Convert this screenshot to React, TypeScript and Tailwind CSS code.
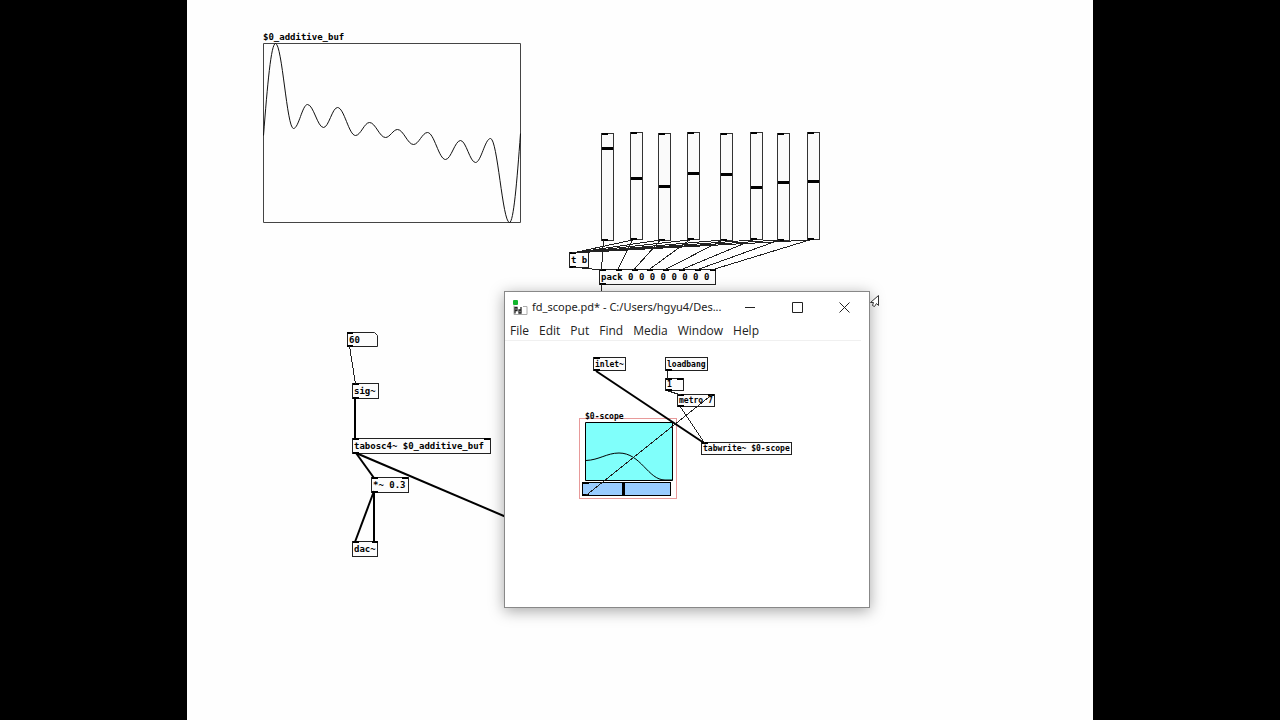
type Wire = { from: [number, number]; to: [number, number]; signal?: boolean };

type BoxProps = {
  x: number;
  y: number;
  w: number;
  h: number;
  text: string;
  inlets?: number[];
  outlets?: number[];
  small?: boolean;
};

const sliders = [
  { x: 414, y: 133, value: 90 },
  { x: 443, y: 132, value: 59 },
  { x: 471, y: 133, value: 52 },
  { x: 500, y: 132, value: 64 },
  { x: 533, y: 133, value: 64 },
  { x: 563, y: 132, value: 50 },
  { x: 590, y: 133, value: 56 },
  { x: 620, y: 132, value: 56 },
];

const packInlets = [0, 16, 32, 47, 63, 79, 95, 110];

const mainWires: Wire[] = [
  ...sliders.map((s, i): Wire => ({ from: [s.x + 2, 240], to: [414 + packInlets[i], 270] })),
  ...sliders.slice(1).map((s): Wire => ({ from: [s.x + 2, 240], to: [385, 253] })),
  { from: [385, 267], to: [414, 270] },
  { from: [414, 284], to: [414, 300] },
  { from: [162, 346], to: [168, 384] },
  { from: [168, 398], to: [168, 439], signal: true },
  { from: [169, 453], to: [187, 478], signal: true },
  { from: [169, 453], to: [324, 519], signal: true },
  { from: [187, 491], to: [168, 542], signal: true },
  { from: [187, 491], to: [187, 542], signal: true },
];

const scopeWires: Wire[] = [
  { from: [91, 30], to: [199, 102], signal: true },
  { from: [162, 30], to: [162, 38] },
  { from: [163, 50], to: [175, 54] },
  { from: [175, 66], to: [199, 102] },
  { from: [81, 154], to: [206, 54] },
];

// turning points of the stored wave, first and last are the array ends
const wave: [number, number][] = [
  [0, 92], [12, 0], [30, 85], [44, 61], [60, 84], [74, 64], [92, 92], [106, 79], [122, 94],
  [134, 86], [150, 101], [164, 89], [182, 116], [197, 97], [212, 119], [227, 95], [246, 179], [257, 90],
];

function wavePath(points: [number, number][]) {
  const last = points.length - 1;
  let d = `M${points[0][0]} ${points[0][1]}`;
  for (let i = 1; i <= last; i++) {
    const [x0, y0] = points[i - 1];
    const [x1, y1] = points[i];
    const dx = x1 - x0;
    const dy = y1 - y0;
    const c0 = i === 1 ? [x0 + dx * 0.33, y0 + dy * 0.55] : [x0 + dx * 0.37, y0];
    const c1 = i === last ? [x1 - dx * 0.33, y1 - dy * 0.55] : [x1 - dx * 0.37, y1];
    d += ` C${c0[0]} ${c0[1]} ${c1[0]} ${c1[1]} ${x1} ${y1}`;
  }
  return d;
}

function Wires({ wires }: { wires: Wire[] }) {
  return (
    <svg className="pointer-events-none absolute inset-0 h-full w-full" aria-hidden="true">
      {wires.map((w, i) => {
        const shift = w.signal ? 0 : 0.5;
        return (
          <line
            key={i}
            x1={w.from[0] + shift}
            y1={w.from[1]}
            x2={w.to[0] + shift}
            y2={w.to[1]}
            stroke={w.signal ? '#000' : '#222'}
            strokeWidth={w.signal ? 2 : 1}
            shapeRendering={w.signal ? 'auto' : 'crispEdges'}
          />
        );
      })}
    </svg>
  );
}

function Ports({ inlets = [0], outlets = [0] }: { inlets?: number[]; outlets?: number[] }) {
  return (
    <>
      {inlets.map((p) => (
        <span key={`i${p}`} className="absolute -top-px h-[2px] w-[6px] bg-black" style={{ left: p }} />
      ))}
      {outlets.map((p) => (
        <span key={`o${p}`} className="absolute -bottom-px h-[2px] w-[6px] bg-black" style={{ left: p }} />
      ))}
    </>
  );
}

function ObjectBox({ x, y, w, h, text, inlets, outlets, small }: BoxProps) {
  return (
    <div
      className={`absolute flex items-center whitespace-pre border border-[#222] bg-[#fcfcfc] pl-px font-bold leading-none ${
        small ? 'pt-px text-[8px]' : 'text-[9px]'
      }`}
      style={{ left: x, top: y, width: w, height: h }}
    >
      <Ports inlets={inlets} outlets={outlets} />
      {text}
    </div>
  );
}

function VSlider({ x, y, value, label }: { x: number; y: number; value: number; label: string }) {
  return (
    <div className="absolute h-[108px] w-[13px] border border-[#333] bg-[#fafafa]" style={{ left: x, top: y }}>
      <input
        type="range"
        min={0}
        max={103}
        defaultValue={value}
        aria-label={label}
        className="m-0 block h-full w-full appearance-none bg-transparent [direction:rtl] [writing-mode:vertical-lr] [&::-webkit-slider-thumb]:h-[3px] [&::-webkit-slider-thumb]:w-[11px] [&::-webkit-slider-thumb]:appearance-none [&::-webkit-slider-thumb]:bg-black"
      />
      <Ports />
    </div>
  );
}

function PdIcon() {
  return (
    <svg width="15" height="15" viewBox="0 0 15 15" aria-hidden="true">
      <path d="M1 5.500v9h13v-8H10" fill="#fff" stroke="#aaa" />
      <rect x="0" y="0" width="5" height="5" rx="1" fill="#12b52c" />
      <path d="M2 13.500V7.500h2v3H2M8 7v6H6v-3h2" fill="none" stroke="#222" strokeWidth="1.3" />
    </svg>
  );
}

// graph-on-parent area: array view on top, interval slider under it
function ScopeGraph() {
  return (
    <div className="absolute left-[74px] top-[77px] flex h-[81px] w-[98px] flex-col border border-[#e89a9a] pl-[2px]">
      <div className="-mt-[7px] pl-[3px] text-[8px] font-bold leading-[10px]">$0-scope</div>
      <svg className="ml-[3px] shrink-0" width="88" height="59" fill="#80fffb" stroke="#000">
        <path d="M.5.5h87v58H.5z" />
        <path d="M1 38.500C14 38 22 31 34 31C56 31 63 58 80 58H87" fill="none" />
      </svg>
      <div className="relative mt-px h-[14px] w-[89px] border border-black bg-[#99ccff]">
        <input
          type="range"
          min={0}
          max={84}
          defaultValue={39}
          aria-label="Scope interval"
          className="m-0 block h-full w-full appearance-none bg-transparent [&::-webkit-slider-thumb]:h-[12px] [&::-webkit-slider-thumb]:w-[3px] [&::-webkit-slider-thumb]:appearance-none [&::-webkit-slider-thumb]:bg-black"
        />
        <Ports />
      </div>
    </div>
  );
}

function ScopeWindow() {
  return (
    <section
      aria-label="fd_scope.pd"
      className="absolute left-[317px] top-[291px] flex h-[317px] w-[366px] flex-col border border-[#888] bg-white font-['Open_Sans','Noto_Sans',sans-serif] text-[12px] text-[#222] shadow-[0_3px_14px_rgba(0,0,0,0.35)]"
    >
      <header className="flex h-[30px] items-center pl-2 pr-px">
        <PdIcon />
        <h1 className="ml-1 min-w-0 flex-1 whitespace-nowrap font-['Noto_Sans','Open_Sans',sans-serif] text-[11px]">
          fd_scope.pd* - C:/Users/hgyu4/Des...
        </h1>
        <button type="button" aria-label="Minimize" className="flex h-full w-[47px] shrink-0 items-center justify-center">
          <svg width="11" height="11" stroke="#222"><path d="M0 5.5h10" /></svg>
        </button>
        <button type="button" aria-label="Maximize" className="flex h-full w-[47px] shrink-0 items-center justify-center">
          <svg width="11" height="11" fill="none" stroke="#222"><path d="M.5.5h10v10H.5z" /></svg>
        </button>
        <button type="button" aria-label="Close" className="flex h-full w-[47px] shrink-0 items-center justify-center">
          <svg width="11" height="11" stroke="#222"><path d="M.5.5l10 10M10.500.5l-10 10" /></svg>
        </button>
      </header>
      <nav className="mr-2 flex h-[19px] items-center gap-[10px] border-b border-[#f0f0f0] pl-[5px]">
        {['File', 'Edit', 'Put', 'Find', 'Media', 'Window', 'Help'].map((item) => (
          <button key={item} type="button">{item}</button>
        ))}
      </nav>
      <div className="relative flex-1 overflow-hidden font-['DejaVu_Sans_Mono',monospace] text-black">
        <ObjectBox small x={88} y={16} w={33} h={14} text="inlet~" />
        <ObjectBox small x={160} y={16} w={43} h={14} text="loadbang" inlets={[]} />
        <button
          type="button"
          className="absolute left-[160px] top-[37px] flex h-[13px] w-[19px] items-center border border-[#222] bg-[#fcfcfc] pl-px text-[8px] font-bold leading-none"
        >
          <Ports inlets={[0, 11]} />
          1
        </button>
        <ObjectBox small x={172} y={53} w={38} h={13} text="metro 7" inlets={[0, 30]} />
        <ObjectBox small x={196} y={101} w={91} h={13} text="tabwrite~ $0-scope" outlets={[]} />
        <ScopeGraph />
        <Wires wires={scopeWires} />
      </div>
    </section>
  );
}

export default function App() {
  return (
    <div className="grid min-h-screen grid-cols-[187fr_906fr_187fr] bg-black">
      <main className="relative col-start-2 overflow-hidden bg-[#fefefe] font-['DejaVu_Sans_Mono',monospace] text-black">
        <figure className="absolute left-[76px] top-[31px] flex flex-col">
          <figcaption className="h-3 text-[9px] font-bold leading-3">$0_additive_buf</figcaption>
          <svg width="258" height="180" fill="none" stroke="#111">
            <path d="M.5.5h257v179H.5z" stroke="#444" />
            <path d={wavePath(wave)} transform="translate(.5 .5)" />
          </svg>
        </figure>

        {sliders.map((s, i) => (
          <VSlider key={s.x} x={s.x} y={s.y} value={s.value} label={`Partial ${i + 1}`} />
        ))}
        <ObjectBox x={382} y={252} w={20} h={16} text="t b" />
        <ObjectBox x={412} y={269} w={117} h={16} text="pack 0 0 0 0 0 0 0 0" inlets={packInlets} />

        <div className="absolute left-[160px] top-[332px] h-[15px] w-[31px]">
          <svg className="absolute inset-0" width="31" height="15" fill="#fcfcfc" stroke="#222">
            <path d="M.5.5h27l3 3v11H.5z" />
          </svg>
          <input
            type="text"
            aria-label="Note"
            defaultValue="60"
            className="relative block h-full w-full bg-transparent pl-[2px] text-[9px] font-bold leading-none"
          />
          <span className="absolute left-0 top-0 h-[2px] w-[6px] bg-black" />
          <span className="absolute bottom-0 left-0 h-[2px] w-[6px] bg-black" />
        </div>
        <ObjectBox x={165} y={383} w={27} h={16} text="sig~" />
        <ObjectBox x={165} y={438} w={139} h={16} text="tabosc4~ $0_additive_buf" inlets={[0, 131]} />
        <ObjectBox x={184} y={477} w={38} h={16} text="*~ 0.3" inlets={[0, 30]} />
        <ObjectBox x={165} y={541} w={26} h={16} text="dac~" inlets={[0, 19]} outlets={[]} />

        <Wires wires={mainWires} />
        <ScopeWindow />

        <svg className="absolute left-[683px] top-[294px]" width="10" height="15" fill="#fff" stroke="#333">
          <path d="M8.500 1.500L.5 8.500h3l-1 3 2 1 2-3 2 2z" />
        </svg>
      </main>
    </div>
  );
}
